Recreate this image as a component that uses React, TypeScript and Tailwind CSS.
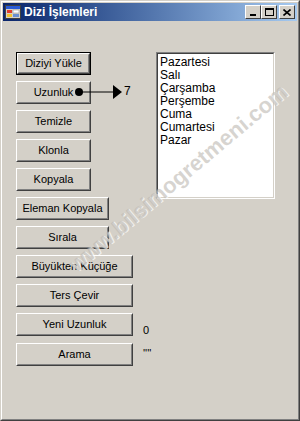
import React from "react";

// düğme: klasik windows kabartma
function WinButton({ label, width, isDefault }: { label: string; width: string; isDefault?: boolean }) {
  const inner = (
    <div className="h-full border border-t-white border-l-white border-r-[#404040] border-b-[#404040]">
      <div className="h-full flex items-center justify-center border border-t-[#d4d0c8] border-l-[#d4d0c8] border-r-[#808080] border-b-[#808080] text-[11px] text-black">
        {label}
      </div>
    </div>
  );
  return (
    <div className={`${width} h-[23px] shrink-0 ${isDefault ? "border border-black" : ""}`}>
      {isDefault ? <div className="h-full">{inner}</div> : inner}
    </div>
  );
}

function CaptionButton({ children }: { children: React.ReactNode }) {
  return (
    <div className="w-[16px] h-[14px] bg-[#d4d0c8] border border-t-white border-l-white border-r-[#404040] border-b-[#404040] flex items-center justify-center">
      {children}
    </div>
  );
}

const gunler = ["Pazartesi", "Salı", "Çarşamba", "Perşembe", "Cuma", "Cumartesi", "Pazar"];

export default function App() {
  return (
    <div className="w-[300px] h-[421px] relative overflow-hidden font-['Liberation_Sans',_Arial,_sans-serif]">
      {/* pencere çerçevesi */}
      <div className="h-full border border-t-[#d4d0c8] border-l-[#d4d0c8] border-r-[#404040] border-b-[#404040] bg-[#d4d0c8]">
        <div className="h-full border border-t-white border-l-white border-r-[#808080] border-b-[#808080] p-px flex flex-col">
          {/* başlık çubuğu */}
          <div className="h-[18px] flex items-center bg-gradient-to-r from-[#0a246a] to-[#a6caf0] pl-[2px] pr-[2px]">
            <svg width="16" height="16" viewBox="0 0 16 16" className="shrink-0">
              <rect x="0.5" y="1.5" width="15" height="13" fill="#d4d0c8" stroke="#404040" />
              <rect x="1" y="2" width="14" height="3" fill="#2a5bd7" />
              <rect x="2" y="6" width="5" height="3" fill="#e03c2c" />
              <rect x="8" y="6" width="6" height="3" fill="#ffffff" stroke="#808080" strokeWidth="0.5" />
              <rect x="2" y="10" width="5" height="3" fill="#f2c230" />
              <rect x="8" y="10" width="6" height="3" fill="#6a8fd0" />
            </svg>
            <span className="ml-[3px] text-white font-bold text-[12px] leading-none">Dizi İşlemleri</span>
            <div className="ml-auto flex items-center">
              <CaptionButton>
                <div className="w-[6px] h-[2px] bg-black mt-[6px] mr-[1px]" />
              </CaptionButton>
              <CaptionButton>
                <div className="w-[9px] h-[8px] border border-black border-t-2" />
              </CaptionButton>
              <div className="w-[2px]" />
              <CaptionButton>
                <svg width="8" height="7" viewBox="0 0 8 7">
                  <path d="M0.5 0.5 L7.5 6.5 M7.5 0.5 L0.5 6.5" stroke="black" strokeWidth="1.6" />
                </svg>
              </CaptionButton>
            </div>
          </div>

          {/* istemci alanı */}
          <div className="flex-1 flex pt-[31px] pl-[13px]">
            <div className="w-[140px] flex flex-col gap-[6px]">
              <WinButton label="Diziyi Yükle" width="w-[75px]" isDefault />
              <div className="relative flex items-start">
                <WinButton label="Uzunluk" width="w-[75px]" />
                <span className="ml-[33px] mt-[4px] text-[12px] leading-[13px]">7</span>
                <svg width="50" height="16" viewBox="0 0 50 16" className="absolute left-[58px] top-[3px]">
                  <circle cx="5" cy="8" r="4" fill="black" />
                  <line x1="5" y1="8" x2="40" y2="8" stroke="black" strokeWidth="1.2" />
                  <path d="M39 1 L48 8 L39 15 Z" fill="black" />
                </svg>
              </div>
              <WinButton label="Temizle" width="w-[75px]" />
              <WinButton label="Klonla" width="w-[75px]" />
              <WinButton label="Kopyala" width="w-[75px]" />
              <WinButton label="Eleman Kopyala" width="w-[93px]" />
              <WinButton label="Sırala" width="w-[93px]" />
              <WinButton label="Büyükten Küçüğe" width="w-[117px]" />
              <WinButton label="Ters Çevir" width="w-[117px]" />
              <div className="flex items-start">
                <WinButton label="Yeni Uzunluk" width="w-[117px]" />
                <span className="ml-[10px] mt-[11px] text-[11px] leading-[13px]">0</span>
              </div>
              <div className="flex items-start">
                <WinButton label="Arama" width="w-[117px]" />
                <span className="ml-[10px] mt-[4px] text-[11px] leading-[13px]">''''</span>
              </div>
            </div>

            {/* liste kutusu */}
            <div className="w-[119px] h-[147px] border border-t-[#808080] border-l-[#808080] border-r-white border-b-white">
              <div className="h-full bg-white border border-t-[#404040] border-l-[#404040] border-r-[#d4d0c8] border-b-[#d4d0c8] pl-[2px] pt-[2px]">
                {gunler.map((g) => (
                  <div key={g} className="text-[12px] leading-[13px] text-black">
                    {g}
                  </div>
                ))}
              </div>
            </div>
          </div>
        </div>
      </div>

      {/* filigran */}
      <div className="absolute left-[178px] top-[178px] -translate-x-1/2 -translate-y-1/2 -rotate-[40deg] whitespace-nowrap text-[22px] font-bold text-[#bcb8b1]/60 [text-shadow:1px_1px_0_rgba(255,255,255,0.7)] pointer-events-none">
        www.bilsimogretmeni.com
      </div>
    </div>
  );
}
